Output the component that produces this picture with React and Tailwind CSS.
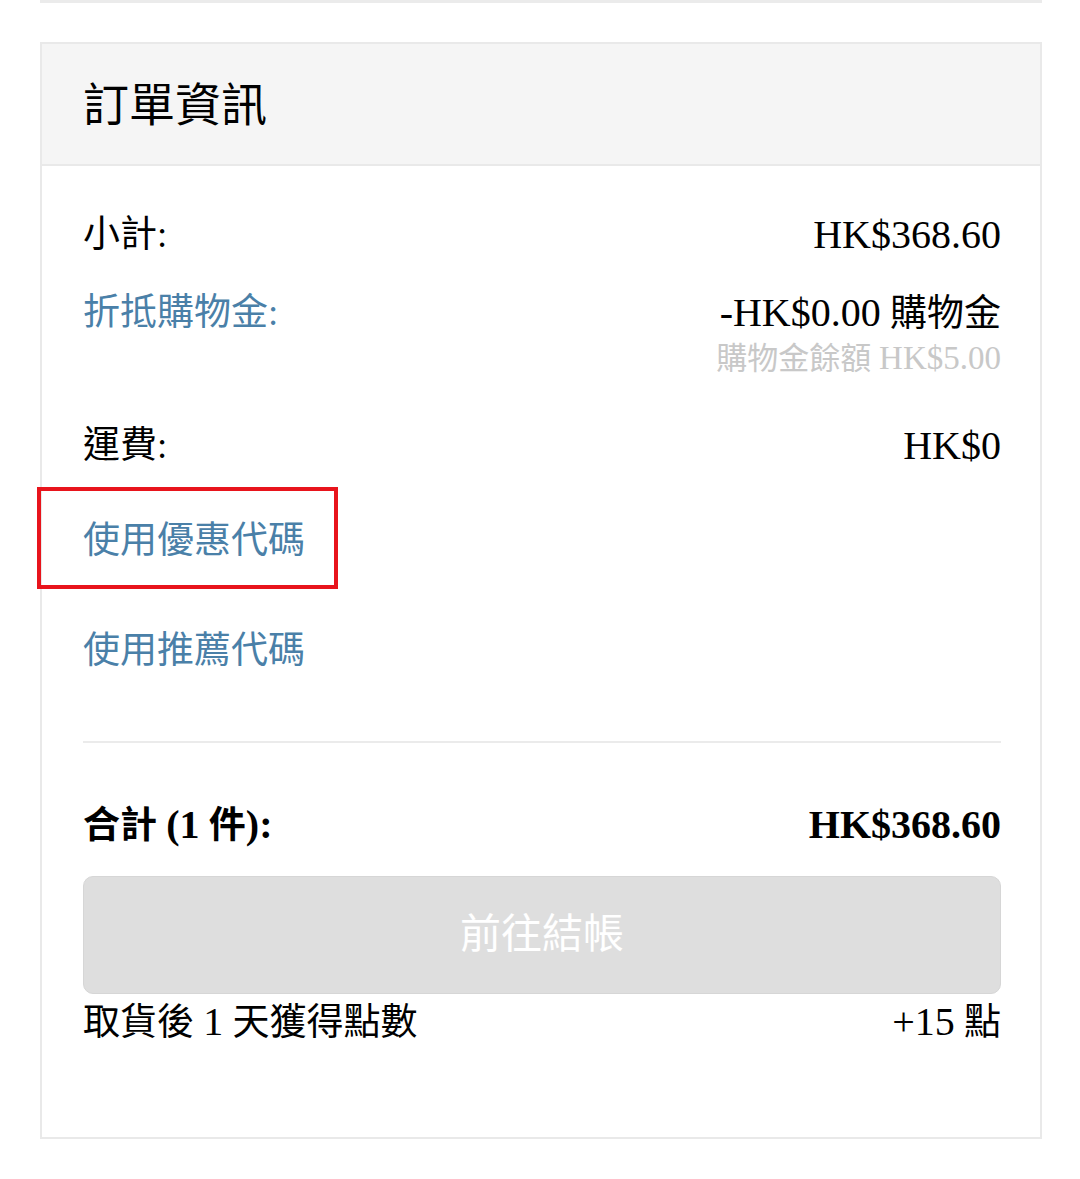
export default function App() {
  const font = { fontFamily: '"Liberation Serif", "Noto Sans CJK TC", serif' };
  return (
    <div className="w-[1080px] h-[1179px] bg-white text-black" style={font}>
      <div className="ml-[40px] w-[1002px] h-[3px] bg-[#ebebeb]" />
      <div className="ml-[40px] w-[1002px] mt-[39px] border-2 border-[#e9e9e9]">
        <div className="h-[122px] bg-[#f5f5f5] border-b-2 border-[#e9e9e9] flex items-center pl-[41px] pt-[4px]">
          <span className="text-[46px] leading-none">訂單資訊</span>
        </div>
        <div className="pl-[41px] pr-[39px] pt-[41px] pb-[87px] text-[37px]">
          <div className="h-[56px] flex items-center justify-between">
            <span>小計:</span>
            <span className="text-[40px]">HK$368.60</span>
          </div>
          <div className="mt-[22px] h-[56px] flex items-center justify-between">
            <span className="text-[#4a80a8]">折抵購物金:</span>
            <span><span className="text-[40px]">-HK$0.00</span> 購物金</span>
          </div>
          <div className="h-[36px] flex items-center justify-end text-[31px] text-[#c8c8c8]">
            <span>購物金餘額 <span className="text-[33px]">HK$5.00</span></span>
          </div>
          <div className="mt-[41px] h-[56px] flex items-center justify-between">
            <span>運費:</span>
            <span className="text-[40px]">HK$0</span>
          </div>
          <div className="mt-[39px] h-[56px] flex items-center">
            <span className="relative text-[#4a80a8]">
              使用優惠代碼
              <span className="absolute left-[-46px] top-[-26px] w-[301px] h-[102px] border-4 border-[#e8141c]" />
            </span>
          </div>
          <div className="mt-[54px] h-[56px] flex items-center">
            <span className="text-[#4a80a8]">使用推薦代碼</span>
          </div>
          <div className="mt-[62px] h-[2px] bg-[#ebebeb]" />
          <div className="mt-[54px] h-[56px] flex items-center justify-between font-bold">
            <span>合計 <span className="text-[40px]">(1</span> 件<span className="text-[40px]">):</span></span>
            <span className="text-[40px]">HK$368.60</span>
          </div>
          <div className="mt-[23px] h-[118px] rounded-[10px] bg-[#dedede] border border-[#d6d6d6] flex items-center justify-center">
            <span className="text-white text-[41px]">前往結帳</span>
          </div>
          <div className="h-[56px] flex items-center justify-between">
            <span>取貨後 <span className="text-[40px]">1</span> 天獲得點數</span>
            <span><span className="text-[40px]">+15</span> 點</span>
          </div>
        </div>
      </div>
    </div>
  );
}
